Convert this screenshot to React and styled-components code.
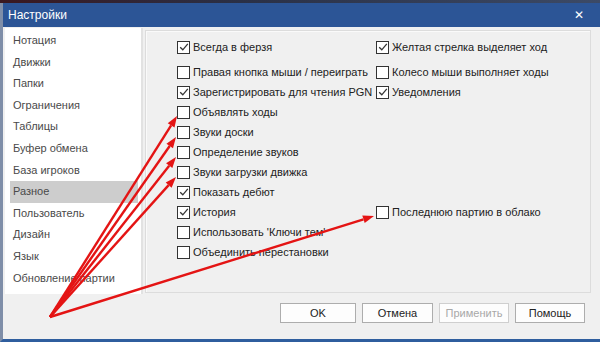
import React from "react";
import styled, { createGlobalStyle } from "styled-components";

const Global = createGlobalStyle`
  html, body { margin: 0; padding: 0; }
  body {
    width: 600px; height: 342px; overflow: hidden;
    background: #1d2740;
    font-family: "Liberation Sans", Arial, sans-serif;
  }
`;

const Screen = styled.div`
  position: relative;
  width: 600px;
  height: 342px;
  padding-top: 3px;
  box-sizing: border-box;
  background: linear-gradient(90deg, #3a1820 0%, #2a3046 40%, #3c4a66 100%);
`;

const Window = styled.div`
  display: flex;
  flex-direction: column;
  height: 336px;
  border-left: 3px solid #7f8ea8;
  border-bottom: 3px solid #2f5e9e;
  background: #f0f0f0;
`;

const TitleBar = styled.div`
  height: 24px;
  flex: none;
  background: #2c5596;
  display: flex;
  align-items: center;
  justify-content: space-between;
  padding: 0 16px 0 5px;
  color: #fff;
  font-size: 12px;
`;

const Close = styled.span`
  font-family: "DejaVu Sans", sans-serif;
  font-weight: bold;
  font-size: 12px;
`;

const Body = styled.div`
  flex: 1;
  display: flex;
  flex-direction: column;
`;

const Main = styled.div`
  display: flex;
  padding: 1px 9px 0 2px;
  gap: 2px;
`;

const List = styled.div`
  width: 138px;
  height: 266px;
  background: #fff;
  border-right: 2px solid #e2e2e2;
  padding-top: 2px;
  box-sizing: border-box;
`;

const ListItem = styled.div`
  height: 21.6px;
  line-height: 21.6px;
  margin: 0 3px 0 5px;
  padding-left: 3px;
  font-size: 11px;
  color: #4a4a4a;
  background: ${(p) => (p.$sel ? "#cdcdcd" : "transparent")};
  white-space: nowrap;
`;

const Panel = styled.div`
  flex: 1;
  margin-top: 2px;
  height: 263px;
  border: 1px solid #dcdcdc;
  box-shadow: inset 1px 1px 0 #fafafa;
  box-sizing: border-box;
  padding: 6px 0 0 31px;
  display: grid;
  grid-template-columns: 199px 1fr;
  grid-template-rows: 25px repeat(10, 20px);
  align-items: start;
`;

const Option = styled.label`
  grid-column: ${(p) => p.$col};
  grid-row: ${(p) => p.$row};
  height: 20px;
  display: flex;
  align-items: center;
  gap: 3px;
  font-size: 11px;
  color: #222;
  white-space: nowrap;
`;

const Box = styled.span`
  width: 11px;
  height: 11px;
  border: 1px solid #333;
  background: #fff;
  flex: none;
  display: flex;
  align-items: center;
  justify-content: center;
`;

const Footer = styled.div`
  display: flex;
  justify-content: flex-end;
  gap: 6px;
  padding: 9px 15px 0 0;
`;

const Button = styled.div`
  width: ${(p) => p.$w || 70}px;
  height: 20px;
  box-sizing: border-box;
  border: 1px solid ${(p) => (p.$disabled ? "#cfcfcf" : "#adadad")};
  background: #fdfdfd;
  color: ${(p) => (p.$disabled ? "#a8a8a8" : "#222")};
  font-size: 11px;
  display: flex;
  align-items: center;
  justify-content: center;
`;

const Overlay = styled.svg`
  position: absolute;
  left: 0;
  top: 0;
  pointer-events: none;
`;

const Check = () => (
  <svg width="10" height="10" viewBox="0 0 10 10">
    <path d="M1.2 5.2 L3.8 7.8 L8.8 1.8" fill="none" stroke="#333" strokeWidth="1.3" />
  </svg>
);

const Opt = ({ row, col, checked, children }) => (
  <Option $row={row} $col={col}>
    <Box>{checked && <Check />}</Box>
    {children}
  </Option>
);

const items = [
  "Нотация", "Движки", "Папки", "Ограничения", "Таблицы", "Буфер обмена",
  "База игроков", "Разное", "Пользователь", "Дизайн", "Язык", "Обновление партии",
];

const origin = [50, 317];
const targets = [
  [177, 116],
  [176, 137],
  [176, 157],
  [176, 177],
  [374, 216],
];

const Arrow = ({ to }) => {
  const [x0, y0] = origin;
  const [x1, y1] = to;
  const dx = x1 - x0, dy = y1 - y0;
  const len = Math.hypot(dx, dy);
  const ux = dx / len, uy = dy / len;
  const hl = 11, hw = 4;
  const bx = x1 - ux * hl, by = y1 - uy * hl;
  const p1 = `${bx - uy * hw},${by + ux * hw}`;
  const p2 = `${bx + uy * hw},${by - ux * hw}`;
  return (
    <g>
      <line x1={x0} y1={y0} x2={bx} y2={by} stroke="#e41414" strokeWidth="2.4" />
      <polygon points={`${x1},${y1} ${p1} ${p2}`} fill="#e41414" />
    </g>
  );
};

export default function App() {
  return (
    <>
      <Global />
      <Screen>
        <Window>
          <TitleBar>
            <span>Настройки</span>
            <Close>✕</Close>
          </TitleBar>
          <Body>
            <Main>
              <List>
                {items.map((t) => (
                  <ListItem key={t} $sel={t === "Разное"}>{t}</ListItem>
                ))}
              </List>
              <Panel>
                <Opt row={1} col={1} checked>Всегда в ферзя</Opt>
                <Opt row={2} col={1}>Правая кнопка мыши / переиграть</Opt>
                <Opt row={3} col={1} checked>Зарегистрировать для чтения PGN</Opt>
                <Opt row={4} col={1}>Объявлять ходы</Opt>
                <Opt row={5} col={1}>Звуки доски</Opt>
                <Opt row={6} col={1}>Определение звуков</Opt>
                <Opt row={7} col={1}>Звуки загрузки движка</Opt>
                <Opt row={8} col={1} checked>Показать дебют</Opt>
                <Opt row={9} col={1} checked>История</Opt>
                <Opt row={10} col={1}>Использовать 'Ключи тем'</Opt>
                <Opt row={11} col={1}>Объединить перестановки</Opt>
                <Opt row={1} col={2} checked>Желтая стрелка выделяет ход</Opt>
                <Opt row={2} col={2}>Колесо мыши выполняет ходы</Opt>
                <Opt row={3} col={2} checked>Уведомления</Opt>
                <Opt row={9} col={2}>Последнюю партию в облако</Opt>
              </Panel>
            </Main>
            <Footer>
              <Button $w={76}>OK</Button>
              <Button $w={71}>Отмена</Button>
              <Button $w={70} $disabled>Применить</Button>
              <Button $w={70}>Помощь</Button>
            </Footer>
          </Body>
        </Window>
        <Overlay width="600" height="342" viewBox="0 0 600 342">
          {targets.map((t, i) => <Arrow key={i} to={t} />)}
        </Overlay>
      </Screen>
    </>
  );
}
